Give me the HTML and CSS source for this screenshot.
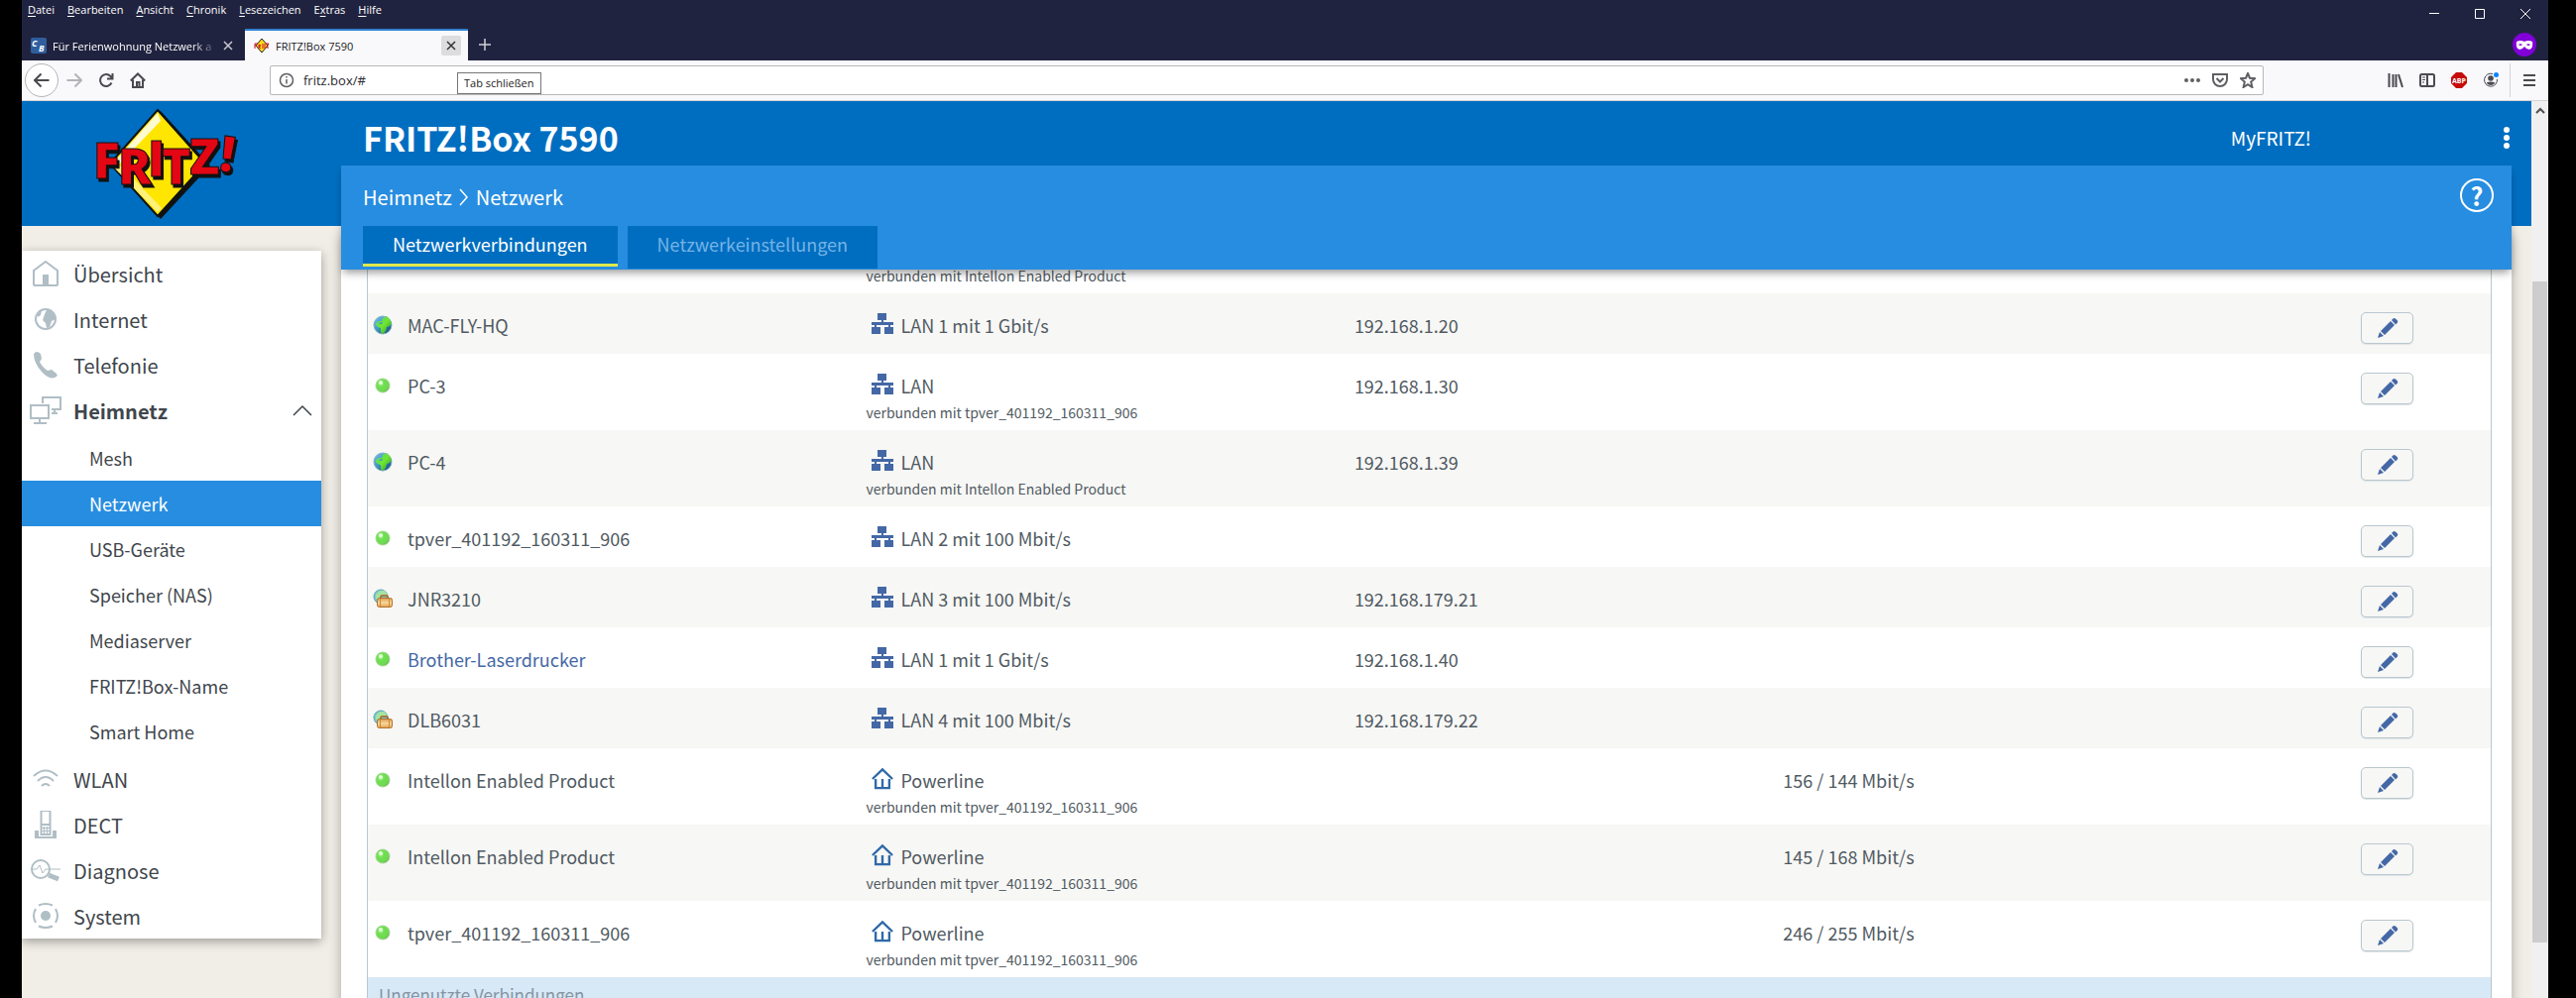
FILE: index.html
```html
<!DOCTYPE html>
<html lang="de">
  <head>
    <meta charset="UTF-8" />
    <meta name="viewport" content="width=device-width, initial-scale=1.0" />
    <title>FRITZ!Box 7590</title>
    <link rel="stylesheet" href="styles.css">
  </head>
  <body>
    <!-- icons -->
    <svg class="defs" aria-hidden="true">
      <defs>
        <radialGradient id="gled" cx="35%" cy="35%" r="70%">
          <stop offset="0" stop-color="#b9f7a4" />
          <stop offset="0.35" stop-color="#6fe052" />
          <stop offset="0.8" stop-color="#6fd953" />
          <stop offset="1" stop-color="#63b04c" />
        </radialGradient>
        <linearGradient id="gsea" x1="0" y1="0" x2="1" y2="1">
          <stop offset="0" stop-color="#7fc4ea" />
          <stop offset="0.5" stop-color="#3a93bd" />
          <stop offset="1" stop-color="#123f6b" />
        </linearGradient>
        <linearGradient id="gland" x1="0" y1="0" x2="1" y2="1">
          <stop offset="0" stop-color="#5ccf8d" />
          <stop offset="0.5" stop-color="#6fe62e" />
          <stop offset="1" stop-color="#2a8d3c" />
        </linearGradient>
        <linearGradient id="gcase" x1="0" y1="0" x2="0" y2="1">
          <stop offset="0" stop-color="#d99a50" />
          <stop offset="0.5" stop-color="#fad998" />
          <stop offset="1" stop-color="#e0a050" />
        </linearGradient>
      </defs>
      <symbol id="led" viewBox="0 0 20 20">
        <circle cx="10" cy="10" r="7" fill="url(#gled)" stroke="#a5d795" />
        <circle cx="8" cy="7" r="2" fill="#e4fbdc" />
      </symbol>
      <symbol id="world" viewBox="0 0 20 20">
        <circle cx="10" cy="10" r="9" fill="url(#gsea)" stroke="#7fb0c8" />
        <path d="M3 8l3-2 3 0 1-3 4-2 3 3 2 4-2 3-3 1-1 4-3 3-2-2 0-4-3-1-2-2z" fill="url(#gland)" />
        <path d="M6 8l3-1 1 1-2 1z" fill="#3a93bd" />
      </symbol>
      <symbol id="guest" viewBox="0 0 20 20">
        <circle cx="8" cy="8" r="7" fill="#7cc6cf" stroke="#5aa5b8" />
        <path d="M3 6l4-4 5 0 3 4-3 1-4 1-2 3-3-1z" fill="#a4e3a0" />
        <path d="M8 9V8q0-1 1-1h5q1 0 1 1v1" fill="none" stroke="#a8621e" stroke-width="1.500" />
        <rect x="4.500" y="9.500" width="15" height="9" rx="2" fill="url(#gcase)" stroke="#b5702a" />
        <path d="M7.500 10v8M16.500 10v8" stroke="#c98840" />
      </symbol>
      <symbol id="lan" viewBox="0 0 24 22">
        <path d="M7 0h9v7h-3v2h10v3h-3v2h3v7h-9v-7h4v-2H6v2h4v7H1v-7h3v-2H1V9h10V7H7z" fill="#4468a6" />
      </symbol>
      <symbol id="powerline" viewBox="0 0 24 24">
        <path d="M1 12L12 1.500 23 12M4.500 12v10h15V12M12 12v10" fill="none" stroke="#2e69a8" stroke-width="2.600" />
      </symbol>
      <symbol id="pencil" viewBox="0 0 22 22">
        <path d="M1 21l2-6 4 4zM4 14L14 4l4 4L8 18zM15 3l2-2q1 0 2 .5l2 2q.5 1 0 2l-2 2z" fill="#4468a6" />
      </symbol>
      <symbol id="close" viewBox="0 0 12 12">
        <path d="M2 2l8 8M10 2l-8 8" fill="none" stroke="currentColor" stroke-width="1.500" />
      </symbol>
    </svg>

    <div class="browser">
      <div class="titlebar">
        <nav class="menubar">
          <a href="#"><u>D</u>atei</a>
          <a href="#"><u>B</u>earbeiten</a>
          <a href="#"><u>A</u>nsicht</a>
          <a href="#"><u>C</u>hronik</a>
          <a href="#"><u>L</u>esezeichen</a>
          <a href="#">E<u>x</u>tras</a>
          <a href="#"><u>H</u>ilfe</a>
        </nav>
        <div class="winbtns">
          <button type="button" aria-label="Minimieren"><svg viewBox="0 0 12 12"><path d="M1 5.500h10" /></svg></button>
          <button type="button" aria-label="Maximieren"><svg viewBox="0 0 12 12"><path d="M1.500 1.500h9v9h-9z" /></svg></button>
          <button type="button" aria-label="Schließen"><svg viewBox="0 0 12 12"><path d="M1 1l10 10M11 1L1 11" /></svg></button>
        </div>
      </div>

      <div class="tabstrip">
        <div class="tab">
          <svg class="favicon" viewBox="0 0 16 16">
            <rect width="16" height="16" rx="2" fill="#2f5e9e" />
            <text class="cb" x="1 8" y="9 14">CB</text>
          </svg>
          <span class="tab-title fade">Für Ferienwohnung Netzwerk a</span>
          <button type="button" class="tab-close" aria-label="Tab schließen"><svg><use href="#close" /></svg></button>
        </div>
        <div class="tab active">
          <svg class="favicon" viewBox="0 0 16 16">
            <path d="M8 1l6 7-6 7-6-7z" fill="#ffd91a" stroke="#222" />
            <path d="M1 6v5M1 6h3M1 8h2M5 7v4M5 7l2 1-2 1 2 2M9 6v5M11 6v5M12 6h3l-2 4h2" fill="none" stroke="#c8102e" />
          </svg>
          <span class="tab-title">FRITZ!Box 7590</span>
          <button type="button" class="tab-close" aria-label="Tab schließen"><svg><use href="#close" /></svg></button>
        </div>
        <button type="button" class="newtab" aria-label="Neuer Tab"><svg viewBox="0 0 14 14"><path d="M7 1v12M1 7h12" /></svg></button>
        <svg class="private" viewBox="0 0 24 24">
          <circle cx="12" cy="12" r="12" fill="#8000d7" />
          <path d="M4 9q4-2 8 0 4-2 8 0 1 7-3 8-3 0-5-3-2 3-5 3-4-1-3-8z" fill="#fff" />
          <path d="M6 12q2-1.500 4 0-2 2-4 0M14 12q2-1.500 4 0-2 2-4 0" fill="#8000d7" />
        </svg>
      </div>

      <div class="toolbar">
        <button type="button" class="back" aria-label="Zurück"><svg viewBox="0 0 16 16"><path d="M15.500 8H1M7.500 1.500L1 8l6.500 6.500" /></svg></button>
        <button type="button" class="tool forward" aria-label="Vor"><svg viewBox="0 0 16 16"><path d="M.5 8H15M8.500 1.500L15 8l-6.500 6.500" /></svg></button>
        <button type="button" class="tool" aria-label="Neu laden"><svg viewBox="0 0 16 16"><path d="M13.500 10.500A6 6 0 1 1 12.500 4L14 6M14.500 1v5.500H9" /></svg></button>
        <button type="button" class="tool" aria-label="Startseite"><svg viewBox="0 0 16 16"><path d="M.8 8.500L8 1.500l7.200 7M3 7.500V15h10V7.500M7 15v-5h2.500v5" /></svg></button>
        <div class="urlbar">
          <svg class="info" viewBox="0 0 16 16"><circle cx="8" cy="8" r="6.500" /><path d="M8 7v4.500M8 4v1.500" /></svg>
          <input type="text" value="fritz.box/#" aria-label="Adresse">
          <svg class="dots" viewBox="0 0 16 16"><circle cx="2" cy="8" r="2" /><circle cx="8" cy="8" r="2" /><circle cx="14" cy="8" r="2" /></svg>
          <svg viewBox="0 0 16 16"><path d="M1 2h14v5a7 7 0 0 1-14 0zM4.500 6L8 9.500 11.500 6" /></svg>
          <svg viewBox="0 0 16 16"><path d="M8 1l2 4.700 5 .5-3.800 3.400L12.400 15 8 12.200 3.600 15l1.200-5.400L1 6.200l5-.5z" /></svg>
        </div>
        <div class="extras">
          <svg viewBox="0 0 16 16"><path d="M1.500 1v14M5.500 2v13M8.500 2v13M11 2l4 13" /></svg>
          <svg viewBox="0 0 16 16"><path d="M2.500 2h11q1.500 0 1.500 1.500v9q0 1.500-1.500 1.500h-11Q1 14 1 12.500v-9Q1 2 2.500 2zM8 2v12" /><path class="fine" d="M3 5h3M3 7.500h3M3 10h2" /></svg>
          <svg class="abp" viewBox="0 0 16 16">
            <path d="M5 0h6l5 5v6l-5 5H5l-5-5V5z" fill="#c70d0b" /><text x="8" y="11">ABP</text>
          </svg>
          <svg viewBox="0 0 16 16">
            <path class="fine" d="M10 1.500A6.500 6.500 0 1 0 14.500 7" /><circle class="solid" cx="8" cy="6" r="2.800" /><path class="solid" d="M3.500 10.500q4.500-2 9 0-4.500 5-9 0z" />
            <circle class="dot" cx="13.500" cy="2.500" r="2.500" />
          </svg>
          <span class="sep"></span>
          <svg viewBox="0 0 16 16"><path d="M2 3h12M2 8h12M2 13h12" /></svg>
        </div>
      </div>
      <div class="tooltip">Tab schließen</div>

      <div class="page">
        <aside class="side">
          <a href="#" class="logo" aria-label="FRITZ!">
            <svg viewBox="0 0 146 114">
              <path d="M69 4L119 59 69 113 19 59z" fill="#111" />
              <path d="M66 3L114 57 66 110 18 57z" fill="#ffe600" stroke="#111" stroke-width="2" />
              <path d="M66 6L21 57l4 3 44-46z" fill="#fffbd0" />
              <path d="M21 60l45 46 4-4-40-42z" fill="#fff17a" />
              <text class="logo-text" x="1 26 56 70 98 127" y="72 78 70 78 68 64" rotate="0 0 0 0 0 8">FRITZ!</text>
            </svg>
          </a>
          <ul class="menu">
            <li><a href="#"><svg viewBox="0 0 32 28"><path d="M5 26q-1 0-1-1V11l12-9 12 9v14q0 1-1 1z" /><path class="fill" d="M13 15h6v11h-6z" /></svg>Übersicht</a></li>
            <li><a href="#"><svg viewBox="0 0 32 28"><circle cx="16" cy="14" r="10" /><path class="fill" d="M15 9l2-4 4 0 5 5 0 4-4 2-2 6-3 1-1-5-3-3zM8 9l4-4-1 5-3 2z" /></svg>Internet</a></li>
            <li><a href="#"><svg viewBox="0 0 32 28"><path class="fill" d="M4 3q3-4 7 0l1 5-2 3q3 6 8 9l4-1 5 4q2 3-2 4-6 2-13-6Q4 12 4 3z" /></svg>Telefonie</a></li>
            <li>
              <a href="#" class="open"><svg viewBox="0 0 32 28"><path d="M13 7V1h18v12h-9M1 9h18v13H1zM25 14v3M22 17h6M10 22v4M4 27h13" /></svg>Heimnetz
                <svg class="caret" viewBox="0 0 20 12"><path d="M1 11l9-9 9 9" /></svg></a>
              <ul class="submenu">
                <li><a href="#">Mesh</a></li>
                <li><a href="#" class="current">Netzwerk</a></li>
                <li><a href="#">USB-Geräte</a></li>
                <li><a href="#">Speicher (NAS)</a></li>
                <li><a href="#">Mediaserver</a></li>
                <li><a href="#">FRITZ!Box-Name</a></li>
                <li><a href="#">Smart Home</a></li>
              </ul>
            </li>
            <li><a href="#"><svg viewBox="0 0 32 28"><path d="M4 11q12-11 24 0M8 16q8-8 16 0M12 21q4-4 8 0" /></svg>WLAN</a></li>
            <li><a href="#"><svg viewBox="0 0 32 28"><path d="M11.500 0h9v24h-9zM11 14h10" /><path class="thin" d="M14.500 16v7M17.500 16v7M12 17.500h8M12 20.500h8" /><path class="fill" d="M5 28v-8h4v6h14v-6h4v8z" /></svg>DECT</a></li>
            <li><a href="#"><svg viewBox="0 0 32 28"><circle cx="11" cy="13" r="9" /><path class="thin" d="M3 13h4l3-4 3 8 3-4h15" /><path class="wide" d="M19 19l10 4" /></svg>Diagnose</a></li>
            <li><a href="#"><svg viewBox="0 0 32 28"><circle class="fill" cx="16" cy="14" r="5" /><path d="M9 3.500q7-3 14 0M9 24.500q7 3 14 0M6 7q-4 7 0 14M26 7q4 7 0 14" /></svg>System</a></li>
          </ul>
        </aside>

        <main class="main">
          <header class="top">
            <h1>FRITZ!Box 7590</h1>
            <a href="#" class="myfritz">MyFRITZ!</a>
            <button type="button" class="kebab" aria-label="Menü"><svg viewBox="0 0 6 22"><circle cx="3" cy="3" r="3" /><circle cx="3" cy="11" r="3" /><circle cx="3" cy="19" r="3" /></svg></button>
          </header>
          <section class="panel">
            <div class="head">
              <div class="crumbs">
                <a href="#">Heimnetz</a>
                <svg viewBox="0 0 10 18"><path d="M1 1l7 8-7 8" /></svg>
                <a href="#">Netzwerk</a>
                <a href="#" class="help" aria-label="Hilfe">?</a>
              </div>
              <nav class="tabs">
                <a href="#" class="selected">Netzwerkverbindungen</a>
                <a href="#">Netzwerkeinstellungen</a>
              </nav>
            </div>
            <table class="devices">
              <colgroup>
                <col class="c-state"><col class="c-name"><col class="c-conn"><col class="c-ip"><col class="c-rate"><col class="c-edit">
              </colgroup>
              <tbody>
                <tr class="cut"><td></td><td></td><td><small>verbunden mit Intellon Enabled Product</small></td><td></td><td></td><td></td></tr>
                <tr>
                  <td><svg class="state"><use href="#world" /></svg></td><td>MAC-FLY-HQ</td>
                  <td><svg class="conn"><use href="#lan" /></svg>LAN 1 mit 1 Gbit/s</td>
                  <td>192.168.1.20</td><td></td>
                  <td><button type="button" aria-label="Bearbeiten"><svg><use href="#pencil" /></svg></button></td>
                </tr>
                <tr class="two">
                  <td><svg class="state"><use href="#led" /></svg></td><td>PC-3</td>
                  <td><svg class="conn"><use href="#lan" /></svg>LAN<small>verbunden mit tpver_401192_160311_906</small></td>
                  <td>192.168.1.30</td><td></td>
                  <td><button type="button" aria-label="Bearbeiten"><svg><use href="#pencil" /></svg></button></td>
                </tr>
                <tr class="two">
                  <td><svg class="state"><use href="#world" /></svg></td><td>PC-4</td>
                  <td><svg class="conn"><use href="#lan" /></svg>LAN<small>verbunden mit Intellon Enabled Product</small></td>
                  <td>192.168.1.39</td><td></td>
                  <td><button type="button" aria-label="Bearbeiten"><svg><use href="#pencil" /></svg></button></td>
                </tr>
                <tr>
                  <td><svg class="state"><use href="#led" /></svg></td><td>tpver_401192_160311_906</td>
                  <td><svg class="conn"><use href="#lan" /></svg>LAN 2 mit 100 Mbit/s</td>
                  <td></td><td></td>
                  <td><button type="button" aria-label="Bearbeiten"><svg><use href="#pencil" /></svg></button></td>
                </tr>
                <tr>
                  <td><svg class="state"><use href="#guest" /></svg></td><td>JNR3210</td>
                  <td><svg class="conn"><use href="#lan" /></svg>LAN 3 mit 100 Mbit/s</td>
                  <td>192.168.179.21</td><td></td>
                  <td><button type="button" aria-label="Bearbeiten"><svg><use href="#pencil" /></svg></button></td>
                </tr>
                <tr>
                  <td><svg class="state"><use href="#led" /></svg></td><td><a href="#">Brother-Laserdrucker</a></td>
                  <td><svg class="conn"><use href="#lan" /></svg>LAN 1 mit 1 Gbit/s</td>
                  <td>192.168.1.40</td><td></td>
                  <td><button type="button" aria-label="Bearbeiten"><svg><use href="#pencil" /></svg></button></td>
                </tr>
                <tr>
                  <td><svg class="state"><use href="#guest" /></svg></td><td>DLB6031</td>
                  <td><svg class="conn"><use href="#lan" /></svg>LAN 4 mit 100 Mbit/s</td>
                  <td>192.168.179.22</td><td></td>
                  <td><button type="button" aria-label="Bearbeiten"><svg><use href="#pencil" /></svg></button></td>
                </tr>
                <tr class="two">
                  <td><svg class="state"><use href="#led" /></svg></td><td>Intellon Enabled Product</td>
                  <td><svg class="conn"><use href="#powerline" /></svg>Powerline<small>verbunden mit tpver_401192_160311_906</small></td>
                  <td></td><td>156 / 144 Mbit/s</td>
                  <td><button type="button" aria-label="Bearbeiten"><svg><use href="#pencil" /></svg></button></td>
                </tr>
                <tr class="two">
                  <td><svg class="state"><use href="#led" /></svg></td><td>Intellon Enabled Product</td>
                  <td><svg class="conn"><use href="#powerline" /></svg>Powerline<small>verbunden mit tpver_401192_160311_906</small></td>
                  <td></td><td>145 / 168 Mbit/s</td>
                  <td><button type="button" aria-label="Bearbeiten"><svg><use href="#pencil" /></svg></button></td>
                </tr>
                <tr class="two">
                  <td><svg class="state"><use href="#led" /></svg></td><td>tpver_401192_160311_906</td>
                  <td><svg class="conn"><use href="#powerline" /></svg>Powerline<small>verbunden mit tpver_401192_160311_906</small></td>
                  <td></td><td>246 / 255 Mbit/s</td>
                  <td><button type="button" aria-label="Bearbeiten"><svg><use href="#pencil" /></svg></button></td>
                </tr>
                <tr class="group"><th colspan="6">Ungenutzte Verbindungen</th></tr>
              </tbody>
            </table>
          </section>
        </main>

        <div class="scrollbar">
          <svg viewBox="0 0 10 10"><path d="M1 8l4-4 4 4" /></svg>
          <div class="thumb"></div>
        </div>
      </div>
    </div>
  </body>
</html>
```

FILE: styles.css
```css
* {
  box-sizing: border-box;
  margin: 0;
  padding: 0;
}
body {
  background-color: #000;
  font-family: "Noto Sans CJK SC", "Open Sans", sans-serif;
  color: #505a62;
}
a {
  color: inherit;
  text-decoration: none;
}
ul {
  list-style: none;
}
button {
  border: none;
  background: none;
  font: inherit;
}
svg {
  display: block;
  flex: none;
}
.defs {
  position: absolute;
  width: 0;
  height: 0;
}
.browser {
  display: flex;
  flex-direction: column;
  height: 100vh;
  margin: 0 28px 0 22px;
  position: relative;
  overflow: hidden;
  background-color: #f1eee7;
}

/* browser window */
.titlebar,
.tabstrip,
.toolbar,
.tooltip {
  font-family: "Open Sans", sans-serif;
  font-size: 11px;
}
.titlebar {
  display: flex;
  justify-content: space-between;
  height: 29px;
  background-color: #20233f;
  color: #fff;
}
.menubar {
  display: flex;
  gap: 13px;
  padding-left: 6px;
  line-height: 20px;
}
.menubar u {
  text-underline-offset: 2px;
}
.winbtns {
  display: flex;
  gap: 34px;
  padding: 8px 17px 0 0;
}
.winbtns button,
.winbtns svg {
  width: 12px;
  height: 12px;
  fill: none;
  stroke: #fff;
}
.tabstrip {
  display: flex;
  height: 32px;
  background-color: #20233f;
  color: #fff;
}
.tab {
  display: flex;
  align-items: center;
  width: 225px;
  padding: 0 7px 0 9px;
  border-top: 2px solid transparent;
}
.tab.active {
  background-color: #f9f9fb;
  border-top-color: #2f7fd0;
  color: #1a1a1e;
}
.favicon {
  width: 16px;
  height: 16px;
}
.cb {
  fill: #fff;
  font-size: 9px;
  font-weight: bold;
  font-style: italic;
}
.tab-title {
  flex: 1;
  margin-left: 6px;
  overflow: hidden;
  white-space: nowrap;
}
.tab-title.fade {
  mask-image: linear-gradient(to right, #000 84%, transparent);
}
.tab-close {
  display: flex;
  align-items: center;
  justify-content: center;
  width: 20px;
  height: 20px;
  border-radius: 2px;
  color: #c8c8d2;
}
.tab-close svg {
  width: 12px;
  height: 12px;
}
.active .tab-close {
  background-color: #dddddf;
  color: #333;
}
.newtab {
  width: 34px;
  padding-left: 10px;
}
.newtab svg {
  width: 14px;
  height: 14px;
  fill: none;
  stroke: #d0d0d8;
  stroke-width: 1.5;
}
.private {
  width: 24px;
  height: 24px;
  margin: 4px 12px 0 auto;
}
.toolbar {
  display: flex;
  align-items: center;
  height: 41px;
  padding: 0 11px 0 3px;
  background-color: #f9f9fb;
  border-bottom: 1px solid #d4d4d8;
}
.toolbar svg {
  width: 16px;
  height: 16px;
  fill: none;
  stroke: #4a4a4f;
  stroke-width: 2;
}
.back {
  display: flex;
  align-items: center;
  justify-content: center;
  width: 34px;
  height: 34px;
  border: 1px solid #b5b5b8;
  border-radius: 50%;
  background-color: #fff;
}
.tool {
  width: 32px;
  padding-left: 8px;
}
.tool.forward svg {
  stroke: #b4b4b8;
}
.urlbar {
  display: flex;
  align-items: center;
  flex: 1;
  gap: 12px;
  height: 30px;
  margin-left: 117px;
  padding: 0 7px 0 8px;
  border: 1px solid #b8b8bb;
  border-radius: 2px;
  background-color: #fff;
}
.urlbar input {
  flex: 1;
  margin-left: -3px;
  border: none;
  outline: none;
  background: none;
  font: 13px "Open Sans", sans-serif;
  color: #2a2a2e;
}
.urlbar svg {
  stroke: #5f5f63;
}
.urlbar .info {
  stroke-width: 1.5;
}
.urlbar .dots {
  fill: #5f5f63;
  stroke: none;
}
.extras {
  display: flex;
  align-items: center;
  gap: 16px;
  margin-left: 125px;
}
.extras .abp {
  stroke: none;
}
.abp text {
  fill: #fff;
  font-size: 7px;
  font-weight: bold;
  text-anchor: middle;
}
.extras .fine {
  stroke-width: 1;
}
.extras .solid {
  fill: #4a4a4f;
  stroke: none;
}
.extras .dot {
  fill: #0a84ff;
  stroke: none;
}
.sep {
  width: 1px;
  height: 34px;
  margin: 0 -5px;
  background-color: #d4d4d8;
}
.tooltip {
  position: absolute;
  left: 439px;
  top: 73px;
  z-index: 5;
  padding: 0 6px;
  border: 1px solid #767676;
  background-color: #fff;
  color: #222;
  line-height: 20px;
}

/* router page */
.page {
  display: flex;
  flex: 1;
  min-height: 0;
  background: linear-gradient(#006ec0, #006ec0) top / 100% 126px no-repeat #f1eee7;
}
.side {
  width: 322px;
  padding-right: 20px;
}
.logo {
  display: block;
  height: 151px;
  padding: 6px 0 0 71px;
}
.logo svg {
  width: 146px;
  height: 114px;
  overflow: visible;
}
.logo-text {
  font: 800 50px "Open Sans", sans-serif;
  fill: #e30613;
  stroke: #111;
  stroke-width: 1;
  filter: drop-shadow(2px 3px 0 #111);
}
.menu {
  background-color: #fff;
  box-shadow: 0 3px 10px rgba(0, 0, 0, 0.35);
  color: #3f464c;
}
.menu a {
  display: flex;
  align-items: center;
  height: 46px;
  padding-left: 8px;
  font-size: 20px;
}
.menu svg {
  width: 32px;
  height: 28px;
  margin-right: 12px;
  fill: none;
  stroke: #b0bec5;
  stroke-width: 2;
}
.menu .fill {
  fill: #b0bec5;
  stroke: none;
}
.menu .thin {
  stroke-width: 1;
}
.menu .wide {
  stroke-width: 5;
}
.menu .open {
  font-weight: bold;
}
.menu .caret {
  width: 20px;
  height: 12px;
  margin: 0 9px 0 auto;
  stroke: #3f464c;
  stroke-width: 1.5;
}
.submenu {
  padding: 2px 0;
}
.submenu a {
  padding-left: 68px;
  font-size: 18px;
}
.submenu .current {
  background-color: #278de0;
  color: #fff;
}
.main {
  display: flex;
  flex-direction: column;
  flex: 1;
  min-width: 0;
  color: #505a62;
}
.top {
  display: flex;
  align-items: center;
  height: 65px;
  padding: 8px 22px 0 22px;
  color: #fff;
}
.top h1 {
  flex: 1;
  font-size: 34px;
  line-height: 50px;
}
.myfritz {
  margin-right: 194px;
  font-size: 19px;
}
.kebab svg {
  width: 6px;
  height: 22px;
  fill: #fff;
}
.panel {
  flex: 1;
  min-height: 0;
  margin-right: 20px;
  background-color: #fff;
  box-shadow: 0 70px 12px rgba(0, 0, 0, 0.3);
}
.head {
  position: relative;
  height: 105px;
  padding: 2px 18px 0 22px;
  background-color: #278de0;
  box-shadow: 0 5px 8px -2px rgba(0, 0, 0, 0.4);
  color: #fff;
}
.crumbs {
  display: flex;
  align-items: center;
  gap: 7px;
  height: 59px;
  font-size: 20px;
}
.crumbs svg {
  width: 10px;
  height: 18px;
  fill: none;
  stroke: #fff;
  stroke-width: 1.5;
}
.help {
  width: 34px;
  height: 34px;
  margin: 0 0 3px auto;
  border: 2px solid #fff;
  border-radius: 50%;
  font-size: 25px;
  font-weight: bold;
  line-height: 30px;
  text-align: center;
}
.tabs {
  display: flex;
  gap: 10px;
}
.tabs a {
  height: 43px;
  padding: 0 30px;
  background-color: #006ec0;
  color: #75b3e5;
  font-size: 18px;
  line-height: 37px;
}
.tabs .selected {
  height: 41px;
  border-bottom: 3px solid #dfe84d;
  color: #fff;
}
.devices {
  width: calc(100% - 46px);
  margin: 0 20px 0 26px;
  table-layout: fixed;
  border-collapse: separate;
  border-spacing: 0;
  border: solid #b9c7cf;
  border-width: 0 1px;
  font-size: 18px;
}
.c-state {
  width: 40px;
}
.c-name {
  width: 21.6%;
}
.c-conn {
  width: 23%;
}
.c-ip {
  width: 20.2%;
}
.c-edit {
  width: 131px;
}
.devices tr {
  height: 61px;
}
.devices .two {
  height: 77px;
}
.devices .cut {
  height: 24px;
}
.devices tr:nth-child(even) {
  background-color: #f7f7f5;
}
.devices td {
  padding-top: 18px;
  vertical-align: top;
  line-height: 28px;
  white-space: nowrap;
}
.devices .cut td {
  padding: 0;
  line-height: 12px;
}
.devices small {
  display: block;
  font-size: 14px;
  line-height: 26px;
}
.devices .cut small {
  line-height: 12px;
}
.devices a {
  color: #4468a6;
}
.devices .state {
  width: 20px;
  height: 20px;
  margin: 4px 0 0 5px;
}
.devices .conn {
  display: inline-block;
  width: 24px;
  height: 22px;
  margin: 0 6px 0 5px;
  vertical-align: -2px;
}
.devices button {
  display: flex;
  align-items: center;
  justify-content: center;
  width: 53px;
  height: 32px;
  margin-top: 1px;
  border: 1px solid #b9c7cf;
  border-radius: 5px;
  background-color: #f7f7f5;
  box-shadow: 0 1px 1px #dfe4e6;
}
.devices button svg {
  width: 22px;
  height: 22px;
}
.devices tr.group {
  height: 40px;
  background-color: #d7e8f6;
}
.group th {
  padding: 5px 0 0 11px;
  vertical-align: top;
  text-align: left;
  font-size: 17px;
  font-weight: normal;
  color: #8494a3;
}
.scrollbar {
  width: 17px;
  padding: 4px 1px 0;
  background-color: #f0f0f0;
}
.scrollbar svg {
  width: 10px;
  height: 10px;
  margin: 0 auto 168px;
  fill: none;
  stroke: #505050;
  stroke-width: 2;
}
.scrollbar .thumb {
  height: 74%;
  background-color: #cdcdcd;
}
```
